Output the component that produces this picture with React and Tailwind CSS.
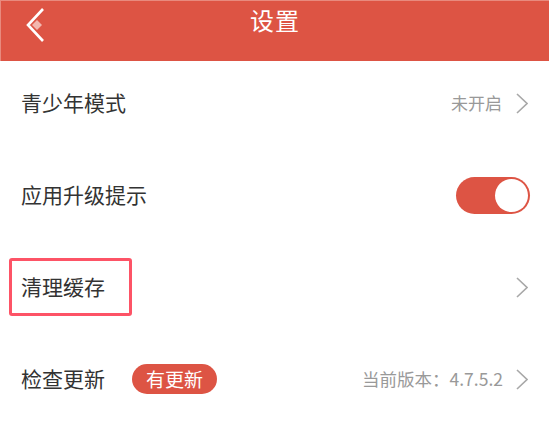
import { useState } from 'react';

const font = { fontFamily: '"Noto Sans CJK SC", "Noto Sans", sans-serif' };

const Chevron = () => (
  <svg width="12" height="21" viewBox="0 0 12 21" className="shrink-0">
    <path d="M1 1 L11 10.5 L1 20" fill="none" stroke="#a8a8a8" strokeWidth="1.6" />
  </svg>
);

const Row = ({ children, className = '' }) => (
  <div className={`relative flex items-center h-[92px] pl-[21px] pr-[21px] pb-[8px] ${className}`}>
    {children}
  </div>
);

export default function App() {
  const [upgradeTip, setUpgradeTip] = useState(true);

  return (
    <div className="w-[549px] h-[423px] bg-white overflow-hidden" style={font}>
      <div className="relative h-[61px] bg-[#dd5444] border-t border-l border-[#e88a7e]">
        <svg width="20" height="36" viewBox="0 0 20 36" className="absolute left-[24px] top-[6px]">
          <path d="M18 2 L3 18 L18 34" fill="none" stroke="#fff" strokeWidth="2.6" />
          <path d="M12 13 L17 18 L12 23 L7 18 Z" fill="#f2b7af" />
        </svg>
        <div className="text-center text-white text-[24px] leading-[32px] pt-[3px] tracking-[1px]">设置</div>
      </div>

      <Row>
        <span className="text-[21px] text-[#333]">青少年模式</span>
        <div className="ml-auto flex items-center gap-[14px]">
          <span className="text-[17px] text-[#999]">未开启</span>
          <Chevron />
        </div>
      </Row>

      <Row>
        <span className="text-[21px] text-[#333]">应用升级提示</span>
        <button
          onClick={() => setUpgradeTip(!upgradeTip)}
          className={`ml-auto mr-[-2px] w-[74px] h-[37px] rounded-full flex items-center p-[2px] ${upgradeTip ? 'bg-[#dd5444] justify-end' : 'bg-[#ddd] justify-start'}`}
        >
          <span className="w-[33px] h-[33px] rounded-full bg-white" />
        </button>
      </Row>

      <Row>
        <div className="absolute left-[9px] top-[13px] w-[123px] h-[58px] border-[3px] border-[#fd5366] rounded-[3px]" />
        <span className="text-[21px] text-[#333]">清理缓存</span>
        <div className="ml-auto">
          <Chevron />
        </div>
      </Row>

      <Row>
        <span className="text-[21px] text-[#333]">检查更新</span>
        <span className="ml-[27px] h-[30px] px-[14px] rounded-full bg-[#dd5444] text-white text-[19px] leading-[30px]">有更新</span>
        <div className="ml-auto flex items-center gap-[13px]">
          <span className="text-[17.5px] text-[#999]">当前版本：4.7.5.2</span>
          <Chevron />
        </div>
      </Row>
    </div>
  );
}
